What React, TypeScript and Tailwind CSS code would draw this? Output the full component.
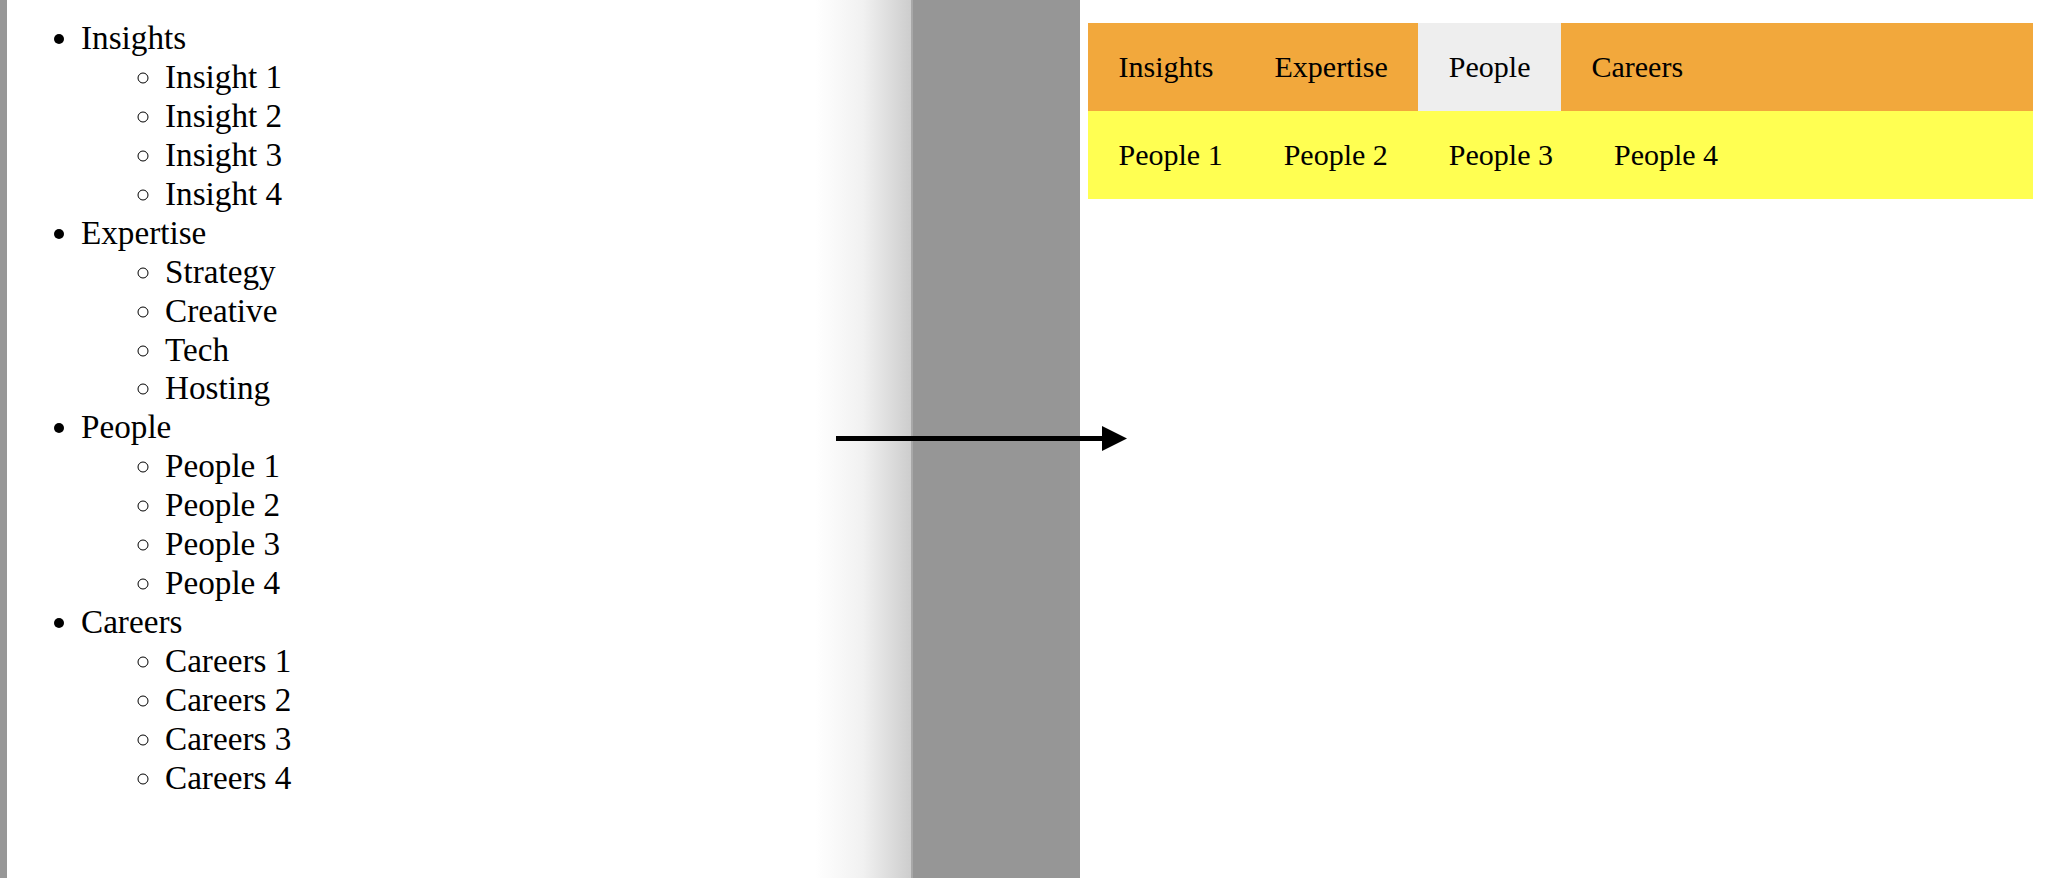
import React from "react";

const sections = [
  { name: "Insights", items: ["Insight 1", "Insight 2", "Insight 3", "Insight 4"] },
  { name: "Expertise", items: ["Strategy", "Creative", "Tech", "Hosting"] },
  { name: "People", items: ["People 1", "People 2", "People 3", "People 4"] },
  { name: "Careers", items: ["Careers 1", "Careers 2", "Careers 3", "Careers 4"] },
];

const active = "People";

export default function App() {
  const current = sections.find((s) => s.name === active)!;

  return (
    <div className="relative flex h-[878px] w-[2054px] overflow-hidden bg-white font-['Liberation_Serif',serif] text-black">
      {/* left edge */}
      <div className="w-[7px] shrink-0 bg-[#979797]" />

      {/* source: plain nested list */}
      <div className="flex flex-1">
        <div className="flex-1">
          <ul className="list-disc pl-[74px] pt-[19px] text-[33.2px] leading-[38.93px]">
            {sections.map((s) => (
              <li key={s.name}>
                {s.name}
                <ul className="list-[circle] pl-[84px]">
                  {s.items.map((it) => (
                    <li key={it}>{it}</li>
                  ))}
                </ul>
              </li>
            ))}
          </ul>
        </div>
        <div className="w-[96px] shrink-0 bg-gradient-to-r from-white via-[#f1f1f1] to-[#cdcdcd]" />
      </div>

      {/* divider */}
      <div className="w-[169px] shrink-0 border-l-2 border-[#a8a8a8] bg-[#969696]" />

      {/* result: menu bar */}
      <div className="w-[974px] shrink-0">
        <div className="ml-[8px] mt-[23px] w-[945px] text-[30px]">
          <nav className="flex h-[88px] bg-[#f2a83c]">
            {sections.map((s) => (
              <div
                key={s.name}
                className={
                  s.name === active
                    ? "px-[30.5px] leading-[88px] bg-[#eeeeee]"
                    : "px-[30.5px] leading-[88px]"
                }
              >
                {s.name}
              </div>
            ))}
          </nav>
          <div className="flex h-[88px] bg-[#ffff52]">
            {current.items.map((it) => (
              <div key={it} className="px-[30.5px] leading-[88px]">
                {it}
              </div>
            ))}
          </div>
        </div>
      </div>

      {/* arrow */}
      <svg
        className="absolute left-[836px] top-[426px]"
        width="291"
        height="25"
        viewBox="0 0 291 25"
      >
        <line x1="0" y1="12.5" x2="268" y2="12.5" stroke="#000" strokeWidth="5" />
        <polygon points="266,0 291,12.5 266,25" fill="#000" />
      </svg>
    </div>
  );
}
